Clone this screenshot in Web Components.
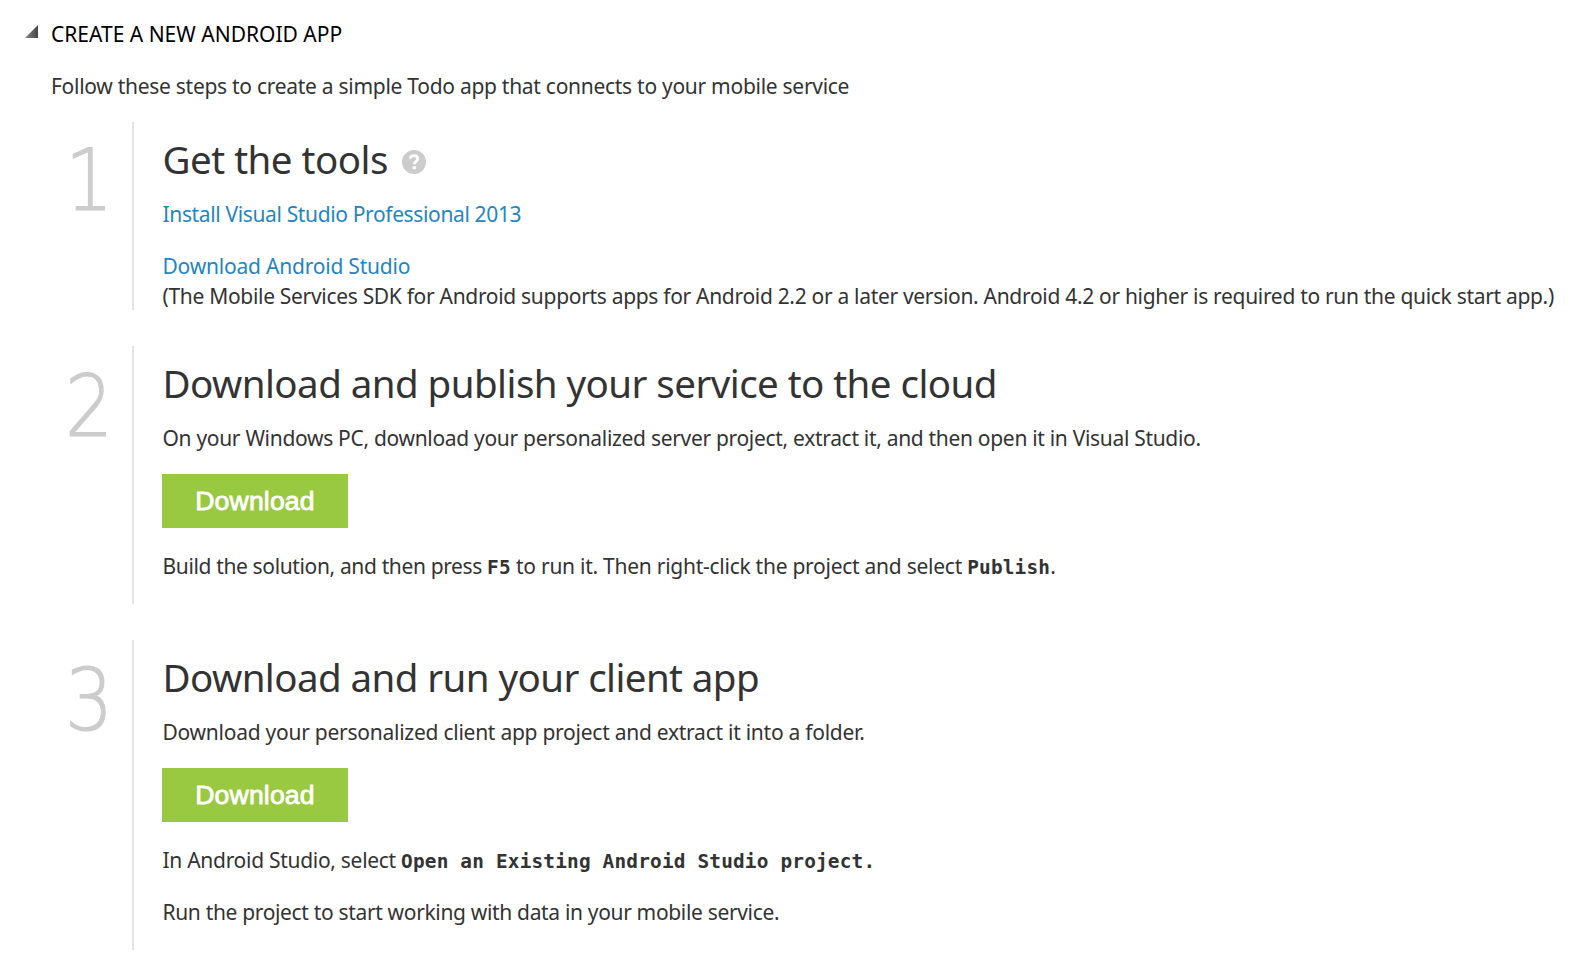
<!DOCTYPE html>
<html lang="en">
<head>
<meta charset="utf-8">
<title>Create a new Android app</title>
<style>
  body { margin: 0; background: #fff; color: #333; font-family: "Noto Sans", "Open Sans", sans-serif; }
</style>
</head>
<body>
<quick-start label="CREATE A NEW ANDROID APP">
  <text-line slot="intro" style="--ls:-.28px">Follow these steps to create a simple Todo app that connects to your mobile service</text-line>

  <setup-step number="1" style="--h:188px;--digit-top:9px">
    <step-title slot="title" style="--ls:-.5px">Get the tools<help-badge></help-badge></step-title>
    <text-line link style="--ls:-.36px">Install Visual Studio Professional 2013</text-line>
    <text-line link style="--ls:-.21px;--top:22px">Download Android Studio</text-line>
    <text-line style="--ls:-.31px">(The Mobile Services SDK for Android supports apps for Android 2.2 or a later version. Android 4.2 or higher is required to run the quick start app.)</text-line>
  </setup-step>

  <setup-step number="2" style="--h:258px">
    <step-title slot="title" style="--ls:-.55px">Download and publish your service to the cloud</step-title>
    <text-line style="--ls:-.31px">On your Windows PC, download your personalized server project, extract it, and then open it in Visual Studio.</text-line>
    <download-button>Download</download-button>
    <text-line style="--ls:-.36px;--top:23px">Build the solution, and then press <key-term>F5</key-term><span style="letter-spacing:-.26px"> to run it. Then right-click the project and select </span><key-term>Publish</key-term>.</text-line>
  </setup-step>

  <setup-step number="3" style="--h:310px">
    <step-title slot="title" style="--ls:-.58px">Download and run your client app</step-title>
    <text-line style="--ls:-.255px">Download your personalized client app project and extract it into a folder.</text-line>
    <download-button>Download</download-button>
    <text-line style="--ls:-.29px;--top:23px">In Android Studio, select <key-term>Open an Existing Android Studio project.</key-term></text-line>
    <text-line style="--ls:-.335px;--top:22px">Run the project to start working with data in your mobile service.</text-line>
  </setup-step>
</quick-start>

<script>
  const define = (name, render) => customElements.define(name, class extends HTMLElement {
    constructor() {
      super();
      this.attachShadow({ mode: 'open' });
    }
    connectedCallback() {
      this.shadowRoot.innerHTML = render(this);
    }
  });

  define('text-line', () => `
    <style>
      :host { display: block; font-size: 21px; line-height: 30px; margin-top: var(--top, 0);
              letter-spacing: var(--ls, 0); white-space: nowrap; }
      :host([link]) { color: #1f86c1; }
    </style>
    <slot></slot>`);

  define('step-title', () => `
    <style>
      :host { display: flex; align-items: center; font-size: 38.5px; line-height: 52px;
              letter-spacing: var(--ls, 0); white-space: nowrap; }
    </style>
    <slot></slot>`);

  define('key-term', () => `
    <style>
      :host { font: bold 19.4px/1 "DejaVu Sans Mono", monospace; letter-spacing: .18px; }
    </style>
    <slot></slot>`);

  define('help-badge', () => `
    <style>
      :host { display: block; width: 24px; height: 24px; margin: 6px 0 0 14px; }
      svg { display: block; }
    </style>
    <svg width="24" height="24" viewBox="0 0 24 24" fill="none">
      <circle cx="12" cy="12" r="12" fill="#ccc"/>
      <path d="M8.3 8.7C8.4 6.7 9.9 5.7 12 5.7c2.2 0 3.7 1.2 3.7 3 0 2.6-3.4 2.7-3.4 5.6" stroke="#fff" stroke-width="2.8"/>
      <rect x="10.7" y="16.2" width="3.1" height="3" fill="#fff"/>
    </svg>`);

  define('download-button', () => `
    <style>
      :host { display: block; margin: 21px 0 0 -.5px; }
      button { display: block; width: 186px; height: 54px; padding: 0; border: 0; background: #99c941; color: #fff;
               font: 26.6px/54px "Liberation Sans", Arial, sans-serif; letter-spacing: .15px; -webkit-text-stroke: .8px #fff; }
    </style>
    <button type="button"><slot></slot></button>`);

  define('setup-step', el => `
    <style>
      :host { display: flex; box-sizing: border-box; height: var(--h); margin-bottom: 36px; }
      .number { width: 80px; box-sizing: border-box; padding: var(--digit-top, 11px) 0 0 12.5px; color: #ccc;
                font: 200 85px/100px "DejaVu Sans", sans-serif; -webkit-text-stroke: 1.2px #ccc; }
      .number span { display: block; width: 56px; transform: scaleX(.89); transform-origin: 0 0; }
      .content { flex: 1; min-width: 0; border-left: 2px solid #e4e4e4; padding: 11px 0 0 28.5px; box-sizing: border-box; }
      .body { margin-top: 14px; }
    </style>
    <div class="number"><span>${el.getAttribute('number')}</span></div>
    <div class="content">
      <slot name="title"></slot>
      <div class="body"><slot></slot></div>
    </div>`);

  define('quick-start', el => `
    <style>
      :host { display: block; box-sizing: border-box; height: 962px; overflow: hidden; padding: 19px 0 0 25px; }
      header { display: flex; height: 30px; gap: 13px; color: #000; font-size: 21px; line-height: 30px; letter-spacing: 0; }
      svg { display: block; margin-top: 6px; }
      .intro { margin: 22px 0 21px 26px; }
      .steps { margin-left: 27px; }
    </style>
    <header>
      <svg width="13" height="13" viewBox="0 0 13 13">
        <defs><linearGradient id="g"><stop stop-color="#888"/><stop offset="1" stop-color="#444"/></linearGradient></defs>
        <path d="M13 0v13H0z" fill="url(#g)"/>
      </svg>
      <span>${el.getAttribute('label')}</span>
    </header>
    <div class="intro"><slot name="intro"></slot></div>
    <div class="steps"><slot></slot></div>`);
</script>
</body>
</html>
